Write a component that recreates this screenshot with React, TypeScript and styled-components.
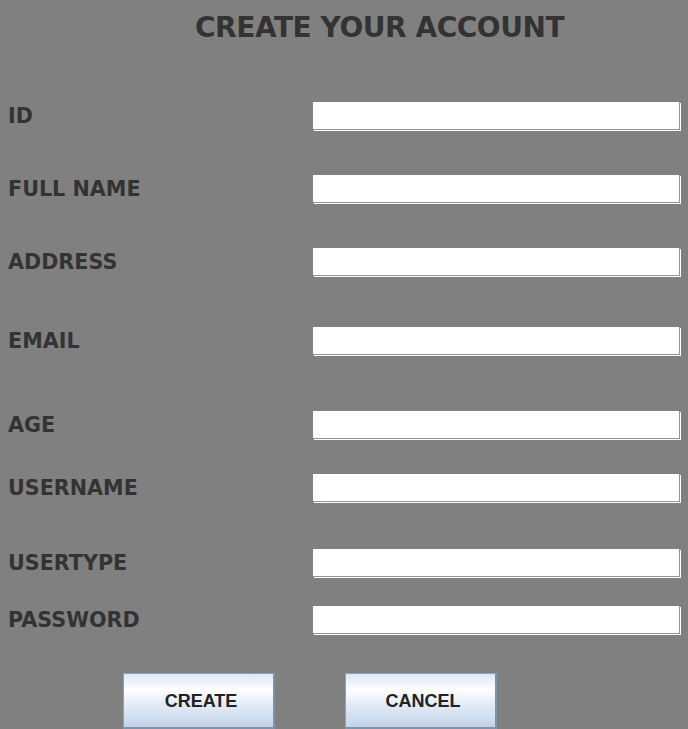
import React from "react";
import styled, { createGlobalStyle } from "styled-components";

const Global = createGlobalStyle`
  html, body { margin: 0; padding: 0; background: #808080; }
  body { font-family: "DejaVu Sans", Tahoma, sans-serif; }
`;

const Page = styled.div`
  width: 688px;
  height: 729px;
  background: #808080;
  display: flex;
  flex-direction: column;
  overflow: hidden;
`;

const Title = styled.h1`
  margin: 0;
  padding: 11px 0 0 195px;
  height: 38px;
  font-family: "DejaVu Sans", Tahoma, sans-serif;
  font-weight: bold;
  font-size: 28px;
  line-height: 34px;
  color: #333333;
  letter-spacing: -0.45px;
  white-space: nowrap;
`;

const Form = styled.div`
  display: flex;
  flex-direction: column;
`;

const Row = styled.div<{ $top: number }>`
  display: flex;
  align-items: center;
  height: 29px;
  margin-top: ${(p) => p.$top}px;
`;

const Label = styled.label`
  width: 305px;
  padding-left: 8px;
  padding-bottom: 2px;
  font-family: "DejaVu Sans", Tahoma, sans-serif;
  font-weight: bold;
  font-size: 20.7px;
  color: #333333;
  white-space: nowrap;
`;

const Field = styled.input`
  width: 367px;
  height: 28px;
  margin: 0;
  padding: 0 4px;
  box-sizing: border-box;
  border: none;
  outline: none;
  background: #ffffff;
  box-shadow: inset -1px -1px 0 #8a96a2, 1px 1px 0 #ffffff;
  align-self: flex-start;
`;

const Buttons = styled.div`
  display: flex;
  gap: 70px;
  padding-left: 123px;
  margin-top: 38px;
`;

const Button = styled.button`
  width: 152px;
  height: 56px;
  margin: 0;
  padding: 2px 0 0 5px;
  border: 1px solid #8ea3ba;
  border-right: 2px solid #7f93a8;
  border-bottom: 2px solid #7f93a8;
  background: linear-gradient(
    to bottom,
    #dce7f3 0%,
    #ffffff 30%,
    #e4edf7 55%,
    #c3d4e8 100%
  );
  font-family: "Liberation Sans", Arial, sans-serif;
  font-weight: bold;
  font-size: 18px;
  color: #222222;
  cursor: pointer;
`;

const rows: { label: string; top: number }[] = [
  { label: "ID", top: 53 },
  { label: "FULL NAME", top: 44 },
  { label: "ADDRESS", top: 44 },
  { label: "EMAIL", top: 50 },
  { label: "AGE", top: 55 },
  { label: "USERNAME", top: 34 },
  { label: "USERTYPE", top: 46 },
  { label: "PASSWORD", top: 28 },
];

export default function App() {
  return (
    <Page>
      <Global />
      <Title>CREATE YOUR ACCOUNT</Title>
      <Form>
        {rows.map((r) => (
          <Row key={r.label} $top={r.top}>
            <Label>{r.label}</Label>
            <Field type="text" />
          </Row>
        ))}
      </Form>
      <Buttons>
        <Button>CREATE</Button>
        <Button>CANCEL</Button>
      </Buttons>
    </Page>
  );
}
